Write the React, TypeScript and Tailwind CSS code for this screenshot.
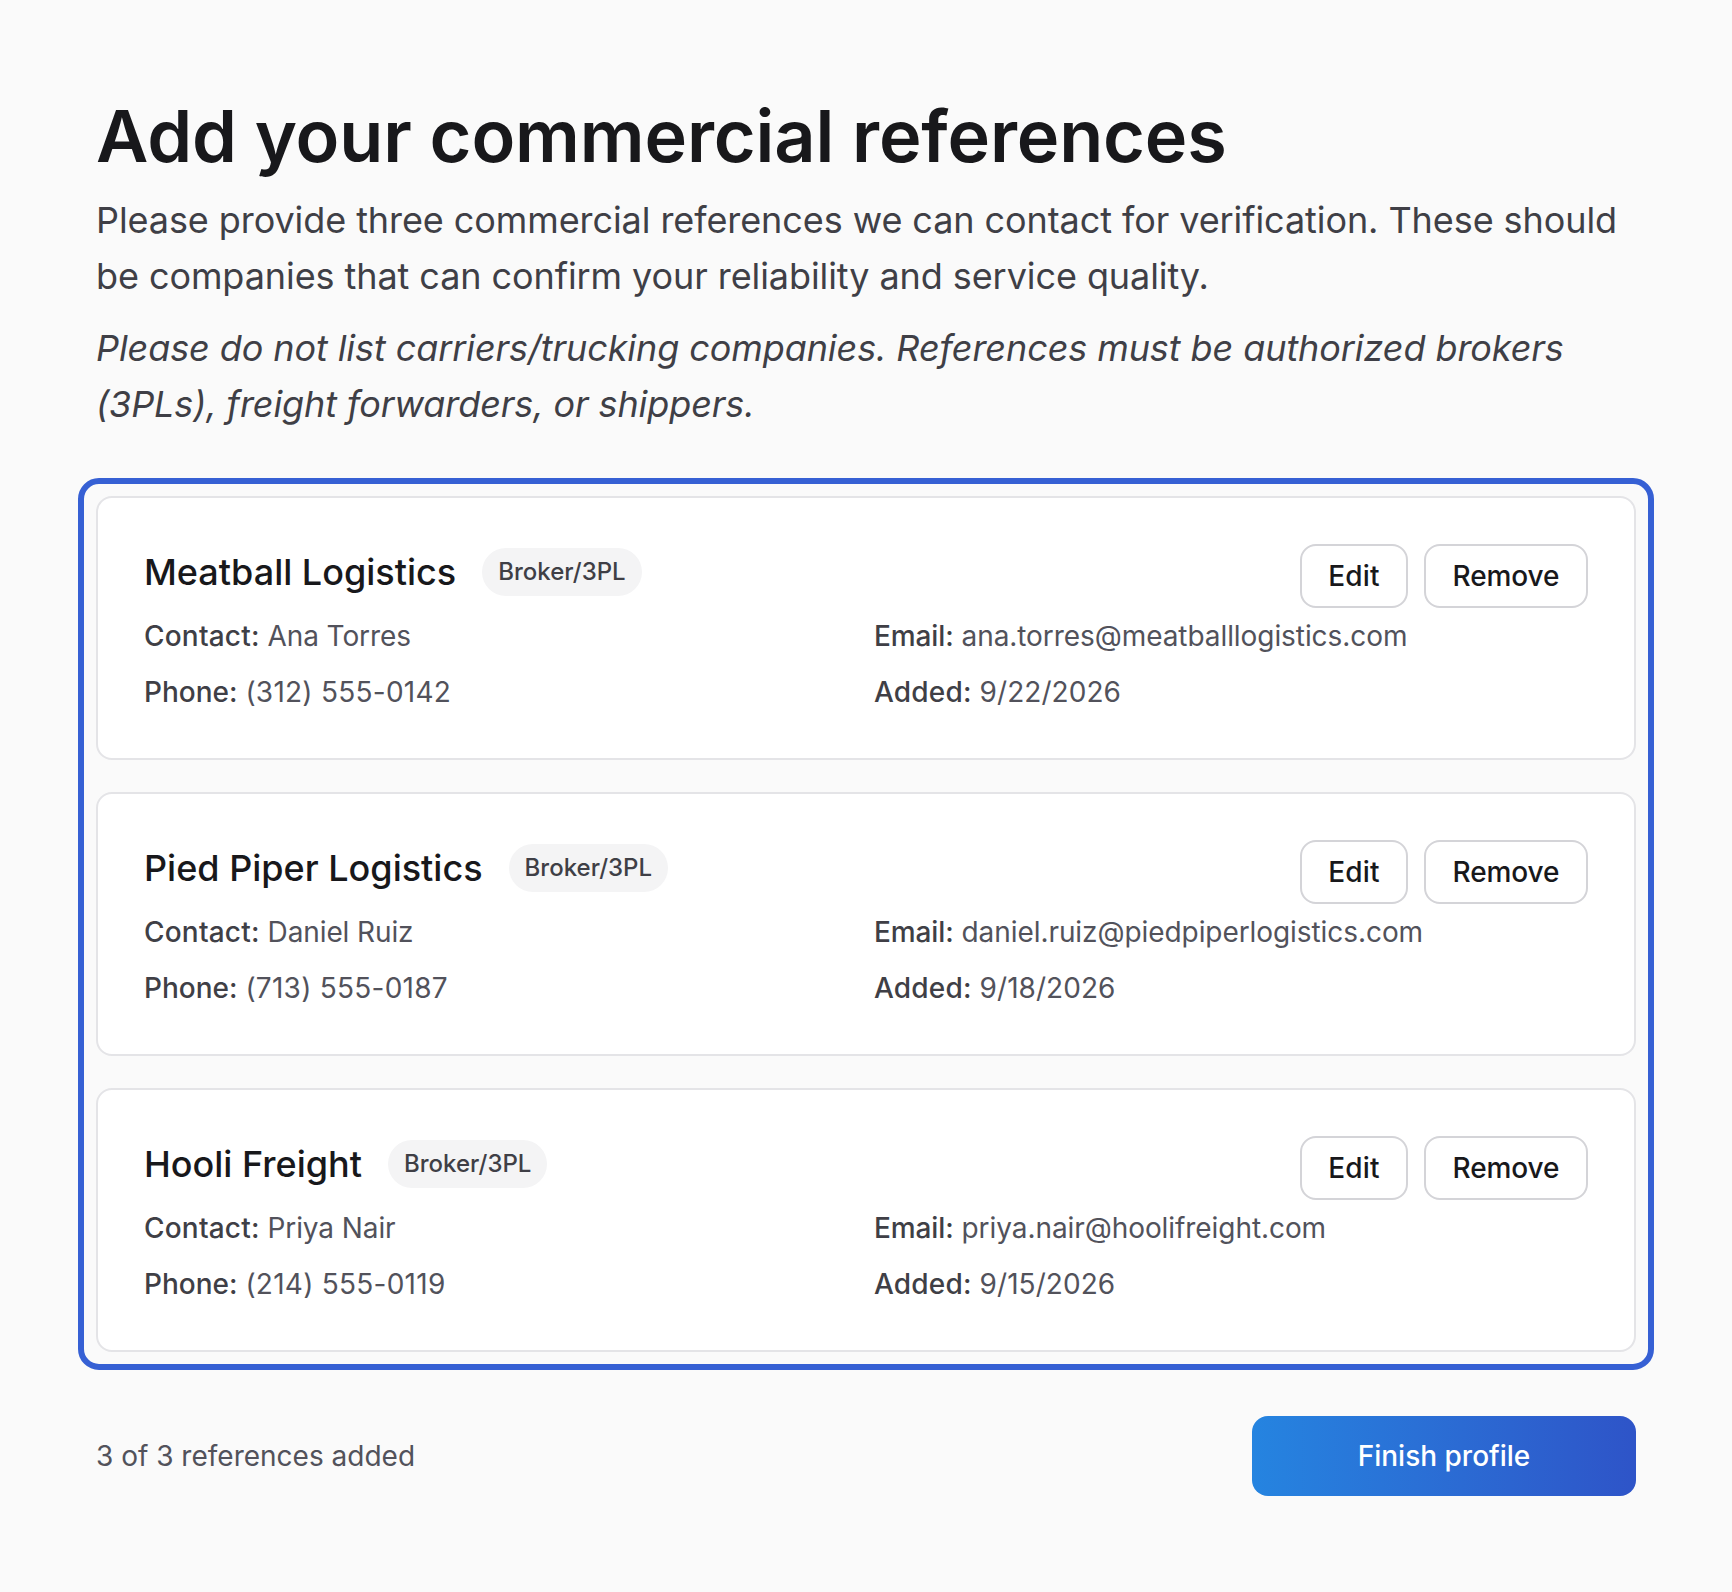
const references = [
  { name: 'Meatball Logistics', contact: 'Ana Torres', phone: '(312) 555-0142', email: 'ana.torres@meatballlogistics.com', added: '9/22/2026' },
  { name: 'Pied Piper Logistics', contact: 'Daniel Ruiz', phone: '(713) 555-0187', email: 'daniel.ruiz@piedpiperlogistics.com', added: '9/18/2026' },
  { name: 'Hooli Freight', contact: 'Priya Nair', phone: '(214) 555-0119', email: 'priya.nair@hoolifreight.com', added: '9/15/2026' },
];

function Detail({ label, value, labelClass, valueClass }: { label: string; value: string; labelClass: string; valueClass: string }) {
  return (
    <div className="text-[28px] leading-[40px] text-[#52525b]">
      <span className={`font-medium text-[#3f3f46] ${labelClass}`}>{label}:</span> <span className={valueClass}>{value}</span>
    </div>
  );
}

function ReferenceCard({ name, contact, phone, email, added }: (typeof references)[number]) {
  return (
    <div className="rounded-2xl border-2 border-[#e4e4e7] bg-white p-[46px]">
      <div className="mb-2 flex items-start justify-between">
        <div className="flex h-14 items-center gap-[26px]">
          <h3 className="text-[36px] leading-[56px] font-medium text-[#18181b]">{name}</h3>
          <span className="flex h-12 items-center rounded-full bg-[#f4f4f5] px-4 text-[24px] font-medium text-[#3f3f46]">Broker/3PL</span>
        </div>
        <div className="flex gap-4">
          <button className="h-16 w-[108px] rounded-2xl border-2 border-[#d4d4d8] bg-white text-[28px] font-medium tracking-[0.2px] text-[#18181b]">Edit</button>
          <button className="h-16 w-[164px] rounded-2xl border-2 border-[#d4d4d8] bg-white text-[28px] font-medium tracking-[-0.1px] text-[#18181b]">Remove</button>
        </div>
      </div>
      <div className="grid grid-cols-2 gap-4">
        <Detail label="Contact" value={contact} labelClass="tracking-[0.2px]" valueClass="tracking-[-0.1px]" />
        <Detail label="Email" value={email} labelClass="tracking-[-0.1px]" valueClass="tracking-[-0.07px]" />
        <Detail label="Phone" value={phone} labelClass="tracking-[0px]" valueClass="tracking-[0.25px]" />
        <Detail label="Added" value={added} labelClass="tracking-[0.2px]" valueClass="tracking-[0.05px]" />
      </div>
    </div>
  );
}

export default function App() {
  return (
    <div className="min-h-[1592px] bg-[#fafafa] px-[78px] py-24 font-['Inter',sans-serif]">
      <div className="px-[18px]">
        <h1 className="mb-4 text-[72px] leading-[80px] font-semibold tracking-[-0.15px] text-[#18181b]">Add your commercial references</h1>
        <p className="mb-4 text-[36px] leading-[56px] tracking-[-0.08px] text-[#3f3f46]">
          Please provide three commercial references we can contact for verification. These should be companies that can confirm your reliability and service quality.
        </p>
        <p className="text-[36px] leading-[56px] tracking-[-0.09px] text-[#3f3f46] italic">
          Please do not list carriers/trucking companies. References must be authorized brokers (3PLs), freight forwarders, or shippers.
        </p>
      </div>

      <div className="mt-[46px] flex flex-col gap-8 rounded-[21px] border-[6px] border-[#3660d4] p-3">
        {references.map(r => (
          <ReferenceCard key={r.name} {...r} />
        ))}
      </div>

      <div className="mt-[46px] flex items-center justify-between px-[18px]">
        <span className="text-[28px] text-[#52525b]">3 of 3 references added</span>
        <button className="h-20 w-96 rounded-2xl bg-gradient-to-r from-[#2584e0] to-[#2e54c8] text-[28px] font-medium text-white">Finish profile</button>
      </div>
    </div>
  );
}
